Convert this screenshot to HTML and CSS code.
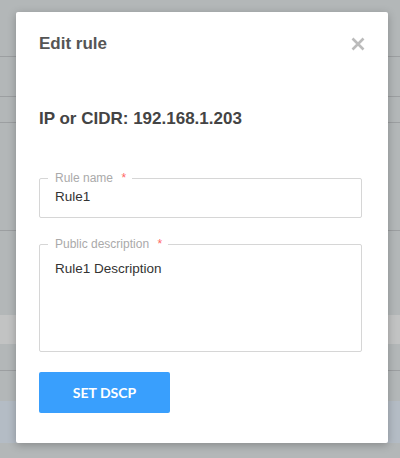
FILE: index.html
```html
<!DOCTYPE html>
<html lang="en">
<head>
    <meta charset="UTF-8">
    <meta name="viewport" content="width=device-width, initial-scale=1.0">
    <title>Edit rule</title>
    <link rel="stylesheet" href="styles.css">
</head>
<body>
    <div class="page">
        <div class="row r1"></div>
        <div class="row r2"></div>
        <div class="row r3"></div>
        <div class="row r4"></div>
        <div class="row r5"></div>
        <div class="row band"></div>
        <div class="row r6"></div>
        <div class="row r7"></div>
        <div class="row blue"></div>
    </div>

    <div class="modal">
        <div class="modal-header">
            <h2>Edit rule</h2>
            <svg class="close" width="14" height="14" viewBox="0 0 14 14">
                <path d="M1.5 1.5 L12.5 12.5 M12.5 1.5 L1.5 12.5" stroke="#bbb" stroke-width="2.6" stroke-linecap="butt"/>
            </svg>
        </div>
        <div class="ip">IP or CIDR: 192.168.1.203</div>
        <div class="field">
            <span class="label">Rule name <span class="req">*</span></span>
            <div class="value">Rule1</div>
        </div>
        <div class="field area">
            <span class="label">Public description <span class="req">*</span></span>
            <div class="value">Rule1 Description</div>
        </div>
        <button type="button">SET DSCP</button>
    </div>
</body>
</html>
```

FILE: styles.css
```css
body {
    margin: 0;
    font-family: "Liberation Sans", Arial, sans-serif;
    background-color: #b3b7b8;
}
.page {
    height: 458px;
    overflow: hidden;
}
.row {
    border-bottom: 1px solid #9c9fa1;
}
.r1 { height: 56px; }
.r2 { height: 39px; }
.r3 { height: 25px; }
.r4 { height: 107px; }
.r5 { height: 84px; border-bottom: none; }
.band { height: 29px; background-color: #c2c3c3; border-bottom: none; }
.r6 { height: 26px; }
.r7 { height: 30px; border-bottom: none; }
.blue { height: 42px; background-color: #b4bcc5; border-bottom: none; }

.modal {
    position: absolute;
    left: 16px;
    top: 12px;
    width: 372px;
    height: 431px;
    box-sizing: border-box;
    padding: 0 26px 0 23px;
    background-color: white;
    border-radius: 2px;
    box-shadow: 0 2px 8px rgba(0, 0, 0, 0.25);
}
.modal-header {
    display: flex;
    justify-content: space-between;
    align-items: center;
    height: 63px;
}
.modal-header h2 {
    margin: 0;
    font-size: 17px;
    font-weight: bold;
    color: #555;
}
.close {
    margin-right: -3px;
}
.ip {
    margin-top: 34px;
    font-size: 17px;
    line-height: 20px;
    font-weight: bold;
    color: #444;
}
.field {
    position: relative;
    box-sizing: border-box;
    margin-top: 49px;
    height: 40px;
    padding: 10px 15px 0 15px;
    border: 1px solid #d6d6d6;
    border-radius: 2px;
}
.label {
    position: absolute;
    top: -8px;
    left: 8px;
    padding: 0 6px 0 7px;
    background-color: white;
    font-size: 12px;
    line-height: 14px;
    color: #aaa;
}
.req {
    color: #f66;
    margin-left: 5px;
}
.value {
    font-size: 13.5px;
    line-height: 16px;
    color: #333;
}
.field.area {
    margin-top: 26px;
    height: 108px;
    padding-top: 16px;
}
button {
    display: block;
    margin-top: 20px;
    width: 131px;
    height: 41px;
    background-color: #399ffd;
    color: white;
    font-family: Lato, sans-serif;
    font-weight: bold;
    font-size: 14px;
    border: none;
    border-radius: 2px;
}
```
